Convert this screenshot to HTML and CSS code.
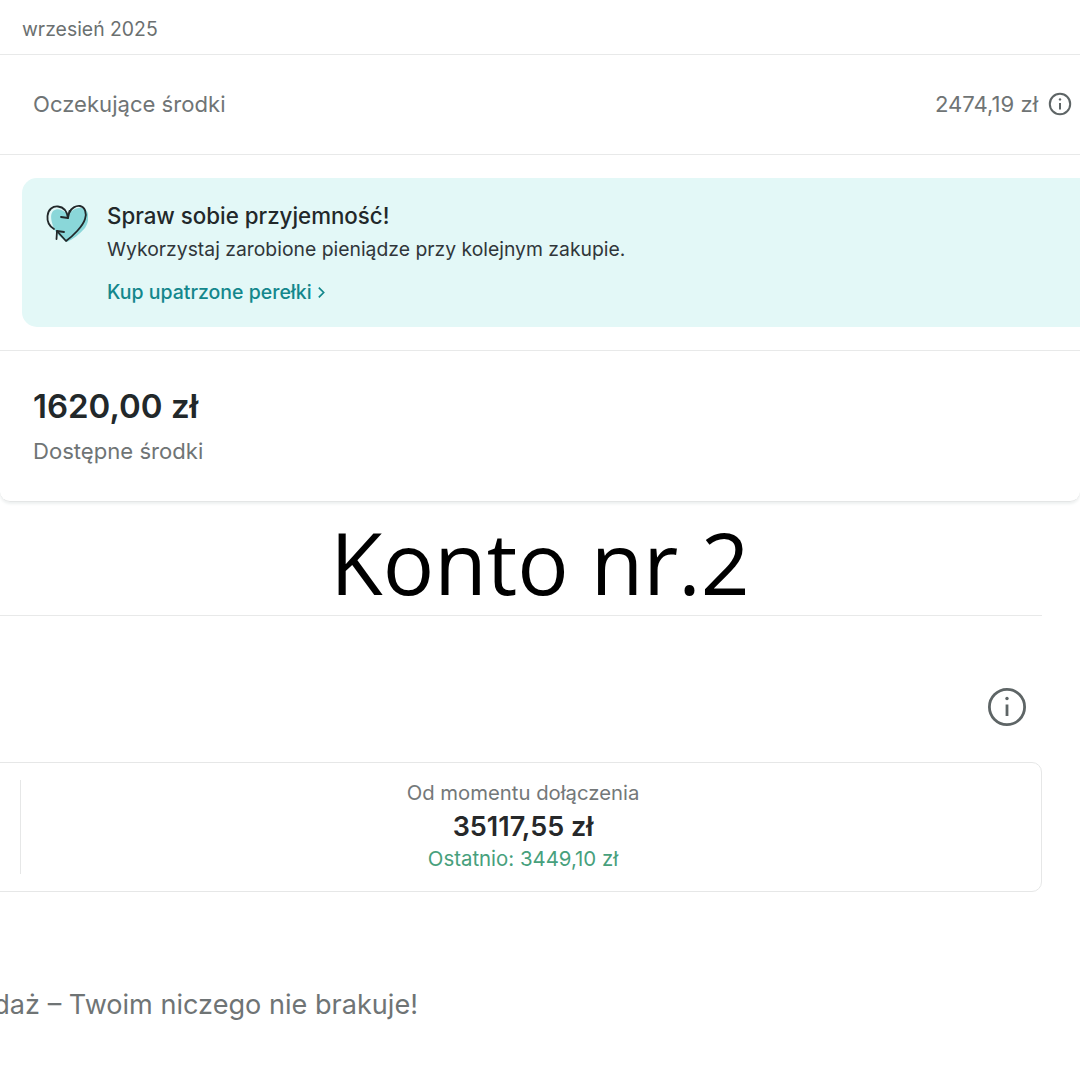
FILE: index.html
```html
<!DOCTYPE html>
<html lang="pl">
<head>
<meta charset="utf-8">
<title>Konto nr.2</title>
<link rel="stylesheet" href="styles.css">
</head>
<body>
<main class="page">
  <section class="top">
    <header class="month">wrzesień 2025</header>
    <div class="pending">
      <span>Oczekujące środki</span>
      <span class="pending-value">2474,19 zł
        <svg class="info-small" viewBox="0 0 24 24" aria-hidden="true"><circle cx="12" cy="12" r="10.2"/><path d="M12 11v6.5"/><circle class="dot" cx="12" cy="7.4" r="1.2"/></svg>
      </span>
    </div>
    <div class="banner-wrap">
      <div class="banner">
        <svg class="heart" viewBox="5 6 43 39" aria-hidden="true">
          <path class="heart-fill" d="M13 13C18 9 24 12 28 17C32 11 40 8 45 11C50 15 49 24 45 30C40 36 33 41 27 44C21 40 15 35 13 28C11 22 10 17 13 13Z"/>
          <path class="heart-line" d="M14 31C9 28 7 23 7.500 18C8 11 13 8 18 8.500C23 9 27 13 28 20"/>
          <path class="heart-line" d="M21 19L28 20L29.500 13"/>
          <path class="heart-line" d="M29.500 14.500C31 10 36 7.500 40 8C45 9 47 15 45 21C43 28 33 38 26 43L17 33"/>
          <path class="heart-line" d="M16.500 41L17 33L24 34"/>
        </svg>
        <div class="banner-text">
          <h2>Spraw sobie przyjemność!</h2>
          <p>Wykorzystaj zarobione pieniądze przy kolejnym zakupie.</p>
          <a class="banner-link" href="#">Kup upatrzone perełki
            <svg class="chev" viewBox="0 0 10 14" aria-hidden="true"><path d="M2.500 2.500L7 7L2.500 11.500"/></svg>
          </a>
        </div>
      </div>
    </div>
    <div class="balance">
      <strong>1620,00 zł</strong>
      <span>Dostępne środki</span>
    </div>
  </section>

  <h1 class="title">Konto nr.2</h1>

  <section class="earnings">
    <div class="info-row">
      <svg class="info-large" viewBox="0 0 38 38" aria-hidden="true"><circle cx="19" cy="19" r="17.600"/><path d="M19 16.500V28"/><circle class="dot" cx="19" cy="10.500" r="1.700"/></svg>
    </div>
    <div class="stats">
      <div class="stats-cell">
        <span class="stats-label">Od momentu dołączenia</span>
        <strong>35117,55 zł</strong>
        <span class="stats-recent">Ostatnio: 3449,10 zł</span>
      </div>
    </div>
  </section>

  <div class="footer-note"><span>sprzedaż – Twoim niczego nie brakuje!</span></div>
</main>
</body>
</html>
```
FILE: styles.css
```css
* { box-sizing: border-box; }
html, body { margin: 0; padding: 0; background: #fff; }
body { width: 1080px; height: 1080px; overflow: hidden; font-family: Inter, "Liberation Sans", sans-serif; color: #26282a; }
.page { width: 1080px; height: 1080px; overflow: hidden; display: flex; flex-direction: column; }

.top { width: 1080px; display: flex; flex-direction: column; }
.month { height: 55px; padding: 18px 0 0 22px; font-size: 19.400px; line-height: 22px; color: #6b7070; border-bottom: 1.500px solid #e8e9e9; }
.pending { height: 100px; padding: 0 8px 2px 33px; display: flex; align-items: center; justify-content: space-between; font-size: 22.100px; color: #6f7475; border-bottom: 1.500px solid #e8e9e9; }
.pending-value { display: flex; align-items: center; gap: 10px; font-size: 22.100px; }
.info-small { width: 24px; height: 24px; fill: none; stroke: #5e6566; stroke-width: 2; }
.dot { fill: #5e6566; stroke: none; }

.banner-wrap { height: 196px; padding: 23px 0; border-bottom: 1.500px solid #e8e9e9; }
.banner { width: 1080px; height: 149px; margin-left: 22px; border-radius: 15px; background: #e3f8f7; padding: 25px 0 0 23px; display: flex; gap: 19px; }
.heart { width: 43px; height: 39px; flex: none; margin-top: 1px; }
.heart-fill { fill: #8ad7d9; }
.heart-line { fill: none; stroke: #22282a; stroke-width: 1.800; stroke-linecap: round; stroke-linejoin: round; }
.banner-text { display: flex; flex-direction: column; }
.banner-text h2 { margin: 0; font-size: 22.300px; line-height: 26px; font-weight: 500; color: #22282a; }
.banner-text p { margin: 8px 0 0; font-size: 19.350px; line-height: 24px; color: #30363a; }
.banner-link { margin-top: 19px; display: flex; align-items: center; gap: 4px; font-size: 19.500px; line-height: 24px; font-weight: 500; color: #13878c; text-decoration: none; }
.chev { width: 11px; height: 15px; fill: none; stroke: #13878c; stroke-width: 1.600; }

.balance { height: 151px; padding: 33px 0 0 33px; display: flex; flex-direction: column; border-radius: 0 0 10px 10px; border-bottom: 1px solid #e4e6e6; box-shadow: 0 2px 3px #edf0f0; }
.balance strong { font-size: 33px; line-height: 44px; font-weight: 600; color: #22282a; }
.balance span { margin-top: 9px; font-size: 22.100px; line-height: 28px; color: #6f7475; }

.title { margin: 0; height: 113px; font-family: "Open Sans", sans-serif; font-size: 85.600px; line-height: 120px; font-weight: 400; color: #000; text-align: center; flex: none; }

.earnings { width: 1042px; flex: none; display: flex; flex-direction: column; border-top: 1.500px solid #e8e9e9; }
.info-row { height: 146px; display: flex; justify-content: flex-end; padding: 72px 16px 0 0; }
.info-large { width: 38px; height: 38px; fill: none; stroke: #5e6566; stroke-width: 2.800; }
.stats { width: 1062px; height: 130px; margin-left: -20px; border: 1.500px solid #e6e7e7; border-radius: 10px; padding: 17px 0 17px 39px; }
.stats-cell { height: 94px; padding: 1px 16px 0 0; border-left: 1.500px solid #e6e7e7; display: flex; flex-direction: column; align-items: center; }
.stats-label { font-size: 20.300px; line-height: 24px; color: #747879; }
.stats-cell strong { margin-top: 6px; font-size: 27px; line-height: 32px; font-weight: 600; color: #26282a; }
.stats-recent { margin-top: 4px; font-size: 20.400px; line-height: 24px; color: #47a07c; }

.footer-note { width: 418px; flex: none; margin-top: 96px; display: flex; justify-content: flex-end; overflow: hidden; white-space: nowrap; font-size: 27.100px; line-height: 34px; color: #6f7475; }
```
